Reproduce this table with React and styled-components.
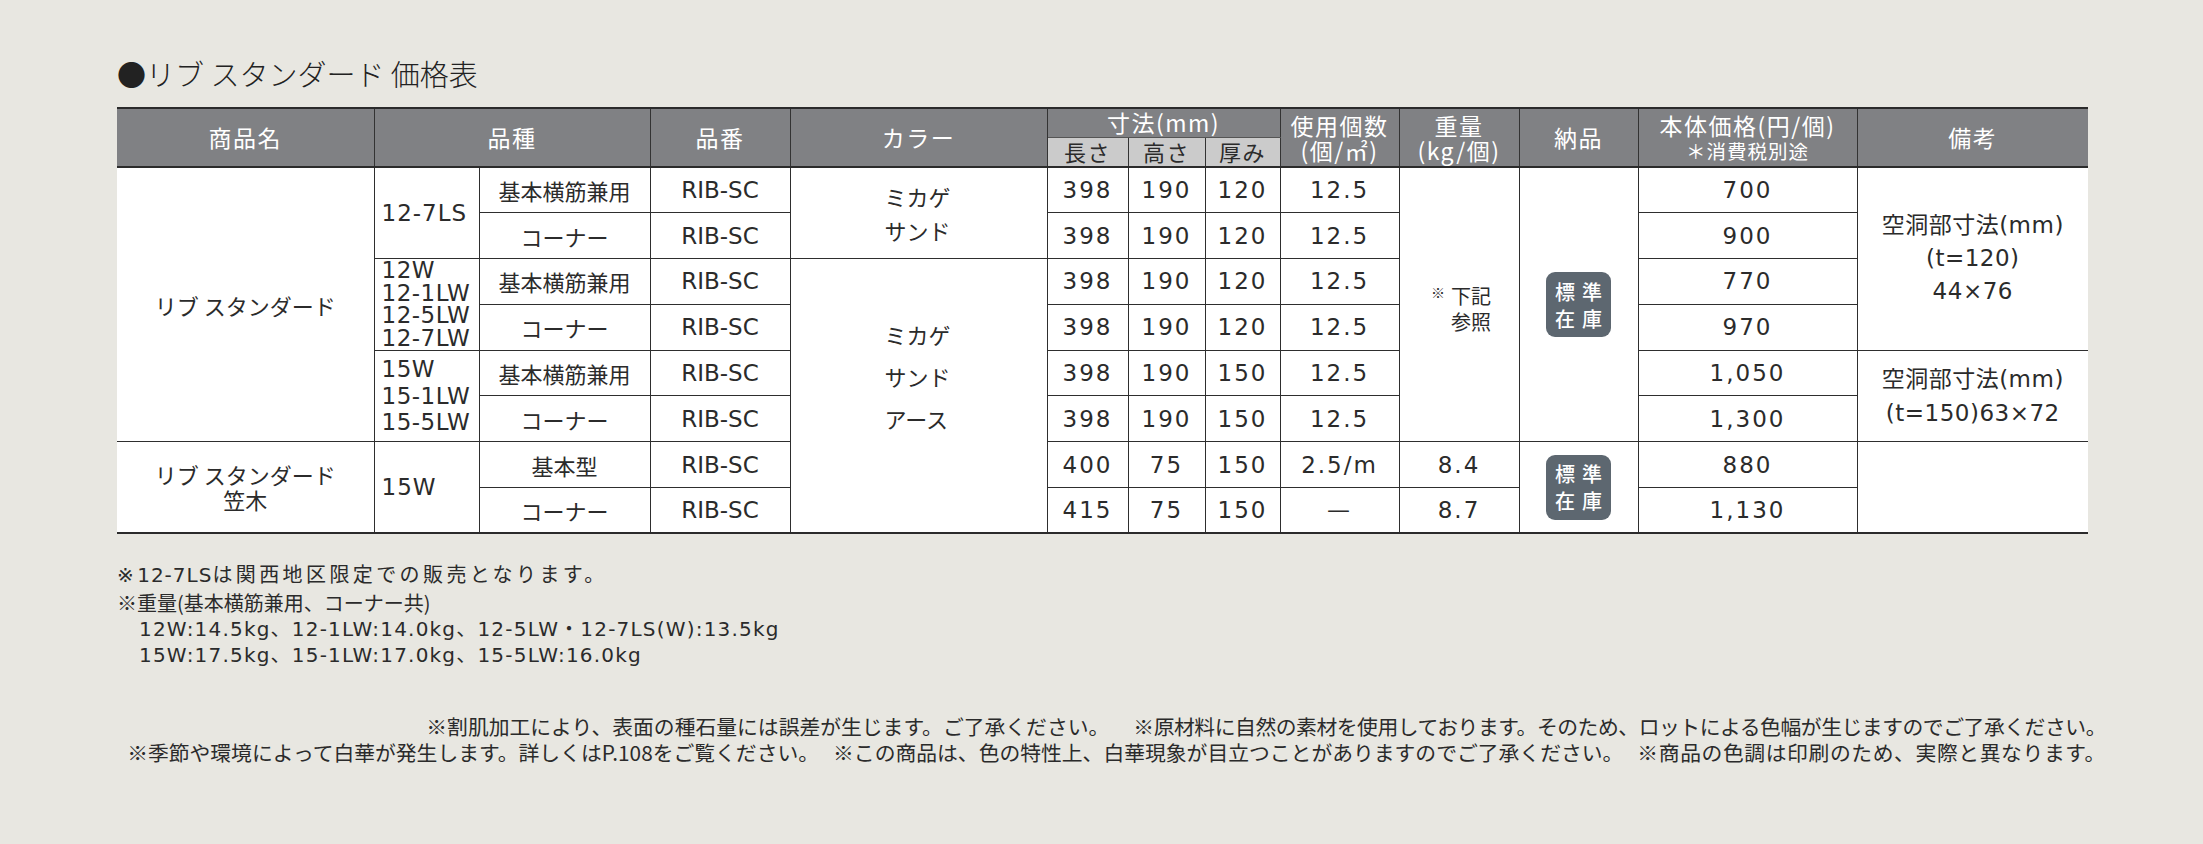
import React from "react";
import styled, { createGlobalStyle } from "styled-components";

const GlobalStyle = createGlobalStyle`
  html, body {
    margin: 0;
    padding: 0;
    background: #e8e7e1;
  }
  body {
    font-family: "DejaVu Sans", "Noto Sans CJK JP", sans-serif;
    color: #2b2b2b;
  }
`;

const Page = styled.div`
  width: 2203px;
  height: 844px;
  box-sizing: border-box;
  padding: 52px 115px 0 117px;
  background: #e8e7e1;
  overflow: hidden;
`;

const Title = styled.h1`
  margin: 0;
  font-family: "Noto Sans CJK JP", sans-serif;
  font-weight: 300;
  font-size: 29px;
  line-height: 42px;
  color: #222;
`;

const Table = styled.table`
  margin-top: 13px;
  width: 1971px;
  table-layout: fixed;
  border-collapse: collapse;
  background: #fff;
  border-top: 2px solid #2b2b2b;
  border-bottom: 2px solid #2b2b2b;
  border-left: hidden;
  border-right: hidden;
`;

const HeadRow = styled.tr`
  height: ${(p) => p.$h}px;
`;

const Th = styled.th`
  padding: 0;
  background: ${(p) => (p.$sub ? "#cbcbcb" : "#808184")};
  color: ${(p) => (p.$sub ? "#2b2b2b" : "#fff")};
  font-family: "Noto Sans CJK JP", sans-serif;
  font-weight: 400;
  font-size: ${(p) => (p.$sub ? "22px" : "23px")};
  letter-spacing: 1.5px;
  line-height: 25px;
  text-align: center;
  vertical-align: middle;
  border-left: 1px solid #333;
  border-right: 1px solid #333;
  border-bottom: ${(p) => (p.$group ? "1px solid #555" : "2px solid #2b2b2b")};
`;

const Small = styled.span`
  display: block;
  font-size: 19.5px;
  letter-spacing: 1px;
`;

const Row = styled.tr`
  height: 45.8px;
`;

const Td = styled.td`
  padding: ${(p) => p.$pad || "0"};
  border: 1px solid #2e2e2e;
  text-align: ${(p) => p.$align || "center"};
  vertical-align: middle;
  font-family: "Noto Sans CJK JP", sans-serif;
  font-size: 22px;
  line-height: ${(p) => p.$lh || 26}px;
  color: #2b2b2b;
  white-space: nowrap;
`;

const Num = styled(Td)`
  font-family: "DejaVu Sans", "Noto Sans CJK JP", sans-serif;
  font-size: 23px;
  letter-spacing: ${(p) => p.$ls ?? 2}px;
`;

const Note = styled.div`
  display: inline-flex;
  align-items: flex-start;
  font-size: 20px;
  line-height: 26px;
  text-align: left;
`;

const Mark = styled.span`
  font-size: 14px;
  line-height: 18px;
  margin-right: 6px;
`;

const Badge = styled.div`
  display: inline-flex;
  flex-direction: column;
  align-items: center;
  justify-content: center;
  width: 65px;
  height: 65px;
  border-radius: 9px;
  background: #5d6770;
  color: #fff;
  font-family: "Noto Sans CJK JP", sans-serif;
  font-weight: 500;
  font-size: 20px;
  line-height: 27px;
  letter-spacing: 7px;
  text-indent: 7px;
`;

const Notes = styled.div`
  margin-top: 28px;
  font-family: "DejaVu Sans", "Noto Sans CJK JP", sans-serif;
  font-size: 20px;
  line-height: 26px;
  color: #2b2b2b;
`;

const NoteLine = styled.div`
  padding-left: ${(p) => (p.$indent ? "22px" : "0")};
  margin-bottom: ${(p) => p.$mb || 0}px;
  letter-spacing: ${(p) => p.$ls || 0}px;
  font-family: ${(p) =>
    p.$cjk ? '"Noto Sans CJK JP", sans-serif' : '"DejaVu Sans", "Noto Sans CJK JP", sans-serif'};
`;

const Latin = styled.span`
  letter-spacing: 1px;
`;

const Caution = styled.div`
  margin-top: 45px;
  margin-right: -18px;
  font-family: "Noto Sans CJK JP", sans-serif;
  font-size: 20.8px;
  line-height: 26px;
  color: #2b2b2b;
  white-space: nowrap;
`;

const CautionLine = styled.div`
  display: flex;
  justify-content: flex-end;
  gap: ${(p) => p.$gap}px;
`;

const Segment = styled.span`
  letter-spacing: ${(p) => p.$ls || 0}px;
`;

const widths = [257, 105, 171, 140, 257, 81, 77, 75, 119, 120, 119, 219, 231];

const cautionA = [
  { t: "※割肌加工により、表面の種石量には誤差が生じます。ご了承ください。", ls: 0 },
  {
    t: "※原材料に自然の素材を使用しております。そのため、ロットによる色幅が生じますのでご了承ください。",
    ls: -0.45,
  },
];

const cautionB = [
  { t: "※季節や環境によって白華が発生します。詳しくはP.108をご覧ください。", ls: 0 },
  { t: "※この商品は、色の特性上、白華現象が目立つことがありますのでご了承ください。", ls: 0 },
  { t: "※商品の色調は印刷のため、実際と異なります。", ls: 0.6 },
];

const Lines = ({ items }) =>
  items.map((t, i) => (
    <React.Fragment key={i}>
      {i > 0 && <br />}
      {t}
    </React.Fragment>
  ));

const Dims = ({ v }) => v.map((d, i) => <Num key={i}>{d}</Num>);

const StockBadge = () => (
  <Badge>
    <span>標準</span>
    <span>在庫</span>
  </Badge>
);

export default function App() {
  return (
    <>
      <GlobalStyle />
      <Page>
        <Title>●リブ スタンダード 価格表</Title>
        <Table>
          <colgroup>
            {widths.map((w, i) => (
              <col key={i} style={{ width: w }} />
            ))}
          </colgroup>
          <thead>
            <HeadRow $h={29}>
              <Th rowSpan={2}>商品名</Th>
              <Th rowSpan={2} colSpan={2}>品種</Th>
              <Th rowSpan={2}>品番</Th>
              <Th rowSpan={2}>カラー</Th>
              <Th colSpan={3} $group>寸法(mm)</Th>
              <Th rowSpan={2}>
                使用個数
                <br />
                (個/㎡)
              </Th>
              <Th rowSpan={2}>
                重量
                <br />
                (kg/個)
              </Th>
              <Th rowSpan={2}>納品</Th>
              <Th rowSpan={2}>
                本体価格(円/個)
                <Small>＊消費税別途</Small>
              </Th>
              <Th rowSpan={2}>備考</Th>
            </HeadRow>
            <HeadRow $h={30}>
              <Th $sub>長さ</Th>
              <Th $sub>高さ</Th>
              <Th $sub>厚み</Th>
            </HeadRow>
          </thead>
          <tbody>
            <Row>
              <Td rowSpan={6}>リブ スタンダード</Td>
              <Num rowSpan={2} $align="left" $pad="0 0 0 7px" $ls={1}>
                12-7LS
              </Num>
              <Td>基本横筋兼用</Td>
              <Num $ls={0}>RIB-SC</Num>
              <Td rowSpan={2} $align="left" $pad="0 0 0 94px" $lh={34}>
                <Lines items={["ミカゲ", "サンド"]} />
              </Td>
              <Dims v={["398", "190", "120", "12.5"]} />
              <Td rowSpan={6} $pad="0 0 0 4px">
                <Note>
                  <Mark>※</Mark>
                  <span>
                    下記
                    <br />
                    参照
                  </span>
                </Note>
              </Td>
              <Td rowSpan={6}>
                <StockBadge />
              </Td>
              <Num>700</Num>
              <Num rowSpan={4} $ls={0.5} $lh={33}>
                <Lines items={["空洞部寸法(mm)", "(t=120)", "44×76"]} />
              </Num>
            </Row>
            <Row>
              <Td>コーナー</Td>
              <Num $ls={0}>RIB-SC</Num>
              <Dims v={["398", "190", "120", "12.5"]} />
              <Num>900</Num>
            </Row>
            <Row>
              <Num rowSpan={2} $align="left" $pad="0 0 0 7px" $ls={0.5} $lh={22.5}>
                <Lines items={["12W", "12-1LW", "12-5LW", "12-7LW"]} />
              </Num>
              <Td>基本横筋兼用</Td>
              <Num $ls={0}>RIB-SC</Num>
              <Td rowSpan={6} $align="left" $pad="0 0 40px 94px" $lh={42}>
                <Lines items={["ミカゲ", "サンド", "アース"]} />
              </Td>
              <Dims v={["398", "190", "120", "12.5"]} />
              <Num>770</Num>
            </Row>
            <Row>
              <Td>コーナー</Td>
              <Num $ls={0}>RIB-SC</Num>
              <Dims v={["398", "190", "120", "12.5"]} />
              <Num>970</Num>
            </Row>
            <Row>
              <Num rowSpan={2} $align="left" $pad="0 0 0 7px" $ls={0.5} $lh={26.5}>
                <Lines items={["15W", "15-1LW", "15-5LW"]} />
              </Num>
              <Td>基本横筋兼用</Td>
              <Num $ls={0}>RIB-SC</Num>
              <Dims v={["398", "190", "150", "12.5"]} />
              <Num>1,050</Num>
              <Num rowSpan={2} $ls={0.5} $lh={34}>
                <Lines items={["空洞部寸法(mm)", "(t=150)63×72"]} />
              </Num>
            </Row>
            <Row>
              <Td>コーナー</Td>
              <Num $ls={0}>RIB-SC</Num>
              <Dims v={["398", "190", "150", "12.5"]} />
              <Num>1,300</Num>
            </Row>
            <Row>
              <Td rowSpan={2} $lh={25}>
                <Lines items={["リブ スタンダード", "笠木"]} />
              </Td>
              <Num rowSpan={2} $align="left" $pad="0 0 0 7px" $ls={1}>
                15W
              </Num>
              <Td>基本型</Td>
              <Num $ls={0}>RIB-SC</Num>
              <Dims v={["400", "75", "150", "2.5/m"]} />
              <Num>8.4</Num>
              <Td rowSpan={2}>
                <StockBadge />
              </Td>
              <Num>880</Num>
              <Td rowSpan={2} />
            </Row>
            <Row>
              <Td>コーナー</Td>
              <Num $ls={0}>RIB-SC</Num>
              <Dims v={["415", "75", "150", "—"]} />
              <Num>8.7</Num>
              <Num>1,130</Num>
            </Row>
          </tbody>
        </Table>
        <Notes>
          <NoteLine $mb={2} $ls={3.4}>
            ※<Latin>12-7LS</Latin>は関西地区限定での販売となります。
          </NoteLine>
          <NoteLine $cjk>※重量(基本横筋兼用、コーナー共)</NoteLine>
          <NoteLine $indent $ls={1.2}>
            12W:14.5kg、12-1LW:14.0kg、12-5LW・12-7LS(W):13.5kg
          </NoteLine>
          <NoteLine $indent $ls={1.2}>
            15W:17.5kg、15-1LW:17.0kg、15-5LW:16.0kg
          </NoteLine>
        </Notes>
        <Caution>
          <CautionLine $gap={24}>
            {cautionA.map((s) => (
              <Segment key={s.t} $ls={s.ls}>
                {s.t}
              </Segment>
            ))}
          </CautionLine>
          <CautionLine $gap={14}>
            {cautionB.map((s) => (
              <Segment key={s.t} $ls={s.ls}>
                {s.t}
              </Segment>
            ))}
          </CautionLine>
        </Caution>
      </Page>
    </>
  );
}
